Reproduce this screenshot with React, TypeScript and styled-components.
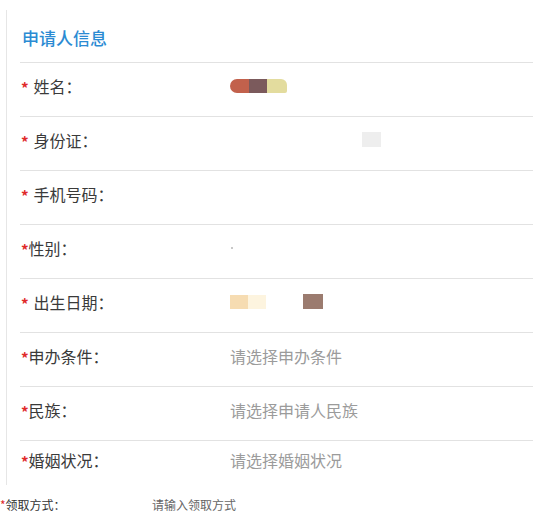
import React from 'react';
import styled, { createGlobalStyle } from 'styled-components';

const GlobalStyle = createGlobalStyle`
  html, body {
    margin: 0;
    padding: 0;
    background: #fff;
    font-family: "Noto Sans CJK SC", "Noto Sans", sans-serif;
  }
`;

const Page = styled.div`
  width: 533px;
  padding-top: 10px;
`;

const Card = styled.section`
  margin-left: 6px;
  border-left: 1px solid #e6e6e6;
  padding-left: 13px;
`;

const Heading = styled.h2`
  margin: 0;
  padding: 18px 0 14px 2px;
  font-size: 17px;
  line-height: 20px;
  font-weight: 500;
  color: #2b8bd3;
  border-bottom: 1px solid #e2e2e2;
`;

const Row = styled.div<{ $last?: boolean }>`
  display: grid;
  grid-template-columns: 210px 1fr;
  align-items: center;
  box-sizing: border-box;
  height: ${(p) => (p.$last ? '44px' : '54px')};
  padding-bottom: ${(p) => (p.$last ? '6px' : '8px')};
  border-bottom: ${(p) => (p.$last ? 'none' : '1px solid #e2e2e2')};
`;

const Label = styled.div`
  display: flex;
  align-items: center;
  padding-left: 1px;
  font-size: 16px;
  line-height: 20px;
  color: #3a3a3a;
`;

const Star = styled.span<{ $gap?: boolean }>`
  color: #e02a2a;
  font-size: 15px;
  font-weight: 700;
  line-height: 20px;
  transform: translateY(2px);
  margin-right: ${(p) => (p.$gap ? '5px' : '0')};
`;

const Placeholder = styled.div`
  font-size: 16px;
  line-height: 20px;
  color: #9b9b9b;
`;

const Value = styled.div`
  display: flex;
  align-items: center;
  height: 20px;
`;

const Swatch = styled.span<{ $w: number; $h?: number; $c: string; $ml?: number; $r?: string }>`
  display: inline-block;
  width: ${(p) => p.$w}px;
  height: ${(p) => p.$h ?? 14}px;
  margin-left: ${(p) => p.$ml ?? 0}px;
  background: ${(p) => p.$c};
  border-radius: ${(p) => p.$r ?? '0'};
  filter: blur(0.6px);
`;

const Footer = styled.div`
  display: grid;
  grid-template-columns: 152px 1fr;
  margin-top: 12px;
  font-size: 12px;
  line-height: 16px;
`;

const SmallLabel = styled.div`
  color: #333;
`;

const SmallStar = styled.span`
  color: #e02a2a;
`;

const SmallPlaceholder = styled.div`
  color: #666;
`;

type Field = {
  label: string;
  gap: boolean;
  value?: React.ReactNode;
  placeholder?: string;
};

const fields: Field[] = [
  {
    label: '姓名：',
    gap: true,
    value: (
      <Value>
        <Swatch $w={19} $c="#c2614c" $r="7px 0 0 7px" />
        <Swatch $w={18} $c="#7b5a5c" />
        <Swatch $w={20} $c="#e3dc9e" $r="0 6px 2px 0" />
      </Value>
    ),
  },
  {
    label: '身份证：',
    gap: true,
    value: (
      <Value>
        <Swatch $w={19} $h={15} $c="#eeeeee" $ml={132} />
      </Value>
    ),
  },
  { label: '手机号码：', gap: true },
  {
    label: '性别：',
    gap: false,
    value: (
      <Value>
        <Swatch $w={2} $h={2} $c="#c8c8c8" $ml={1} />
      </Value>
    ),
  },
  {
    label: '出生日期：',
    gap: true,
    value: (
      <Value>
        <Swatch $w={18} $c="#f6dcb2" />
        <Swatch $w={18} $c="#fdf4df" />
        <Swatch $w={20} $h={15} $c="#9b7b6f" $ml={37} />
      </Value>
    ),
  },
  { label: '申办条件：', gap: false, placeholder: '请选择申办条件' },
  { label: '民族：', gap: false, placeholder: '请选择申请人民族' },
  { label: '婚姻状况：', gap: false, placeholder: '请选择婚姻状况' },
];

const App: React.FC = () => {
  return (
    <>
      <GlobalStyle />
      <Page>
        <Card>
          <Heading>申请人信息</Heading>
          {fields.map((f, i) => (
            <Row key={f.label} $last={i === fields.length - 1}>
              <Label>
                <Star $gap={f.gap}>*</Star>
                {f.label}
              </Label>
              {f.placeholder ? <Placeholder>{f.placeholder}</Placeholder> : f.value ?? <div />}
            </Row>
          ))}
        </Card>
        <Footer>
          <SmallLabel>
            <SmallStar>*</SmallStar>领取方式：
          </SmallLabel>
          <SmallPlaceholder>请输入领取方式</SmallPlaceholder>
        </Footer>
      </Page>
    </>
  );
};

export default App;
